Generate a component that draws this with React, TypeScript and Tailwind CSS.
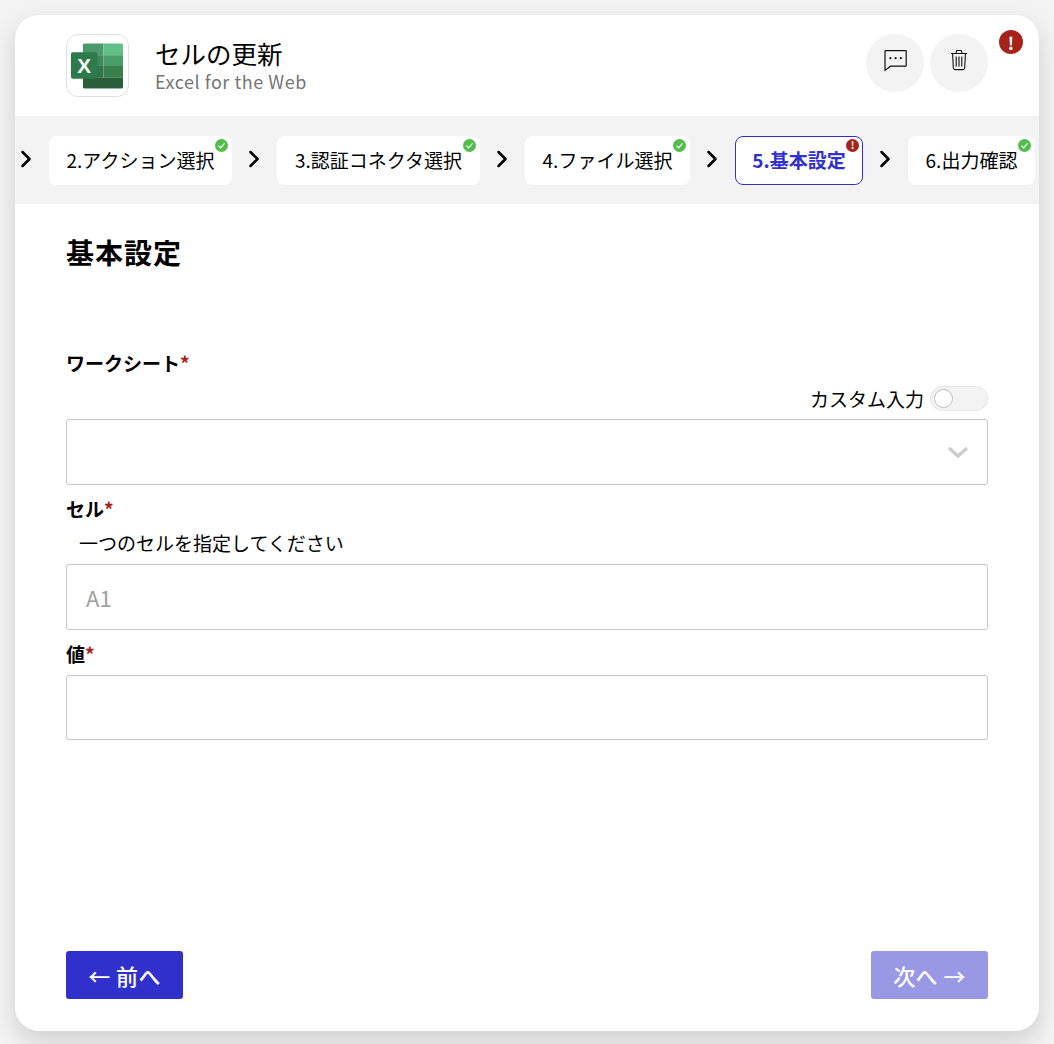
import { ChevronRight } from "lucide-react";

const font = { fontFamily: '"Noto Sans CJK JP", "Noto Sans", sans-serif' };

function ExcelLogo() {
    return (
        <svg width="62" height="62" viewBox="0 0 62 62">
            <defs>
                <clipPath id="sheet">
                    <rect x="16" y="8" width="41" height="46" rx="2" />
                </clipPath>
            </defs>
            <g clipPath="url(#sheet)">
                <rect x="16" y="8" width="21" height="12" fill="#4a9a6c" />
                <rect x="37" y="8" width="20" height="12" fill="#62bf88" />
                <rect x="16" y="20" width="21" height="11" fill="#3f8a5c" />
                <rect x="37" y="20" width="20" height="11" fill="#4a9c68" />
                <rect x="16" y="31" width="21" height="12" fill="#33744a" />
                <rect x="37" y="31" width="20" height="12" fill="#3a7f4e" />
                <rect x="16" y="43" width="41" height="11" fill="#2b5e3a" />
            </g>
            <rect x="4" y="17" width="27" height="27" rx="2" fill="#2f7a4c" />
            <text x="17.5" y="38" textAnchor="middle" fontSize="21" fontWeight="700" fill="#fff" fontFamily='"Liberation Sans", sans-serif'>X</text>
        </svg>
    );
}

function ChatIcon() {
    return (
        <svg width="24" height="24" viewBox="0 0 24 24" fill="none" stroke="#111" strokeWidth="1.2">
            <path d="M2.7 2.6 H22.6 a0.6 0.6 0 0 1 .6 .6 V17.6 a0.6 0.6 0 0 1 -.6 .6 H7.6 L2 22.4 V3.2 a.6 .6 0 0 1 .7 -.6 Z" />
            <circle cx="7.4" cy="10.2" r="1.1" fill="#111" stroke="none" />
            <circle cx="12.6" cy="10.2" r="1.1" fill="#111" stroke="none" />
            <circle cx="17.8" cy="10.2" r="1.1" fill="#111" stroke="none" />
        </svg>
    );
}

function TrashIcon() {
    return (
        <svg width="18" height="22" viewBox="0 0 18 22" fill="none" stroke="#111" strokeWidth="1.1">
            <path d="M1 4.5 H17" />
            <path d="M5.8 4.5 L6.8 1.5 H11.2 L12.2 4.5" />
            <path d="M2.6 4.5 L3.3 19 a1.8 1.8 0 0 0 1.8 1.6 H12.9 a1.8 1.8 0 0 0 1.8 -1.6 L15.4 4.5" />
            <path d="M6.2 7.5 V17.5 M9 7.5 V17.5 M11.8 7.5 V17.5" />
        </svg>
    );
}

function StatusDot({ error }: { error?: boolean }) {
    if (error) {
        return (
            <span className="absolute top-[2px] right-[3px] flex h-[13px] w-[13px] items-center justify-center rounded-full bg-[#a5231b] text-[10px] leading-none font-bold tracking-normal text-white">
                !
            </span>
        );
    }
    return (
        <span className="absolute top-[3px] right-[4px] flex h-[13px] w-[13px] items-center justify-center rounded-full bg-[#52bd4a]">
            <svg width="9" height="9" viewBox="0 0 9 9" fill="none" stroke="#fff" strokeWidth="1.2">
                <path d="M1.5 4.8 L3.6 6.8 L7.5 2.4" />
            </svg>
        </span>
    );
}

function Step({ label, width, active }: { label: string; width: string; active?: boolean }) {
    return (
        <div
            className={`relative flex h-[49px] shrink-0 items-center justify-center rounded-lg text-[19px] whitespace-nowrap ${width} ${
                active ? "border border-[#3030cc] bg-white font-bold text-[#3030cc]" : "bg-white text-black"
            }`}
        >
            {label}
            <StatusDot error={active} />
        </div>
    );
}

function Arrow() {
    return (
        <div className="mb-[3px] flex w-[45px] shrink-0 justify-center">
            <ChevronRight size={28} strokeWidth={2.2} className="-ml-[1px] text-black" />
        </div>
    );
}

function Label({ children }: { children: string }) {
    return (
        <div className="text-[19px] leading-[26px] font-bold text-black">
            {children}
            <span className="text-[#a5231b]">*</span>
        </div>
    );
}

export default function App() {
    return (
        <div style={font} className="h-[1044px] w-[1054px] overflow-hidden bg-[#f3f3f3] p-[15px] pb-[13px]">
            <div className="relative flex h-[1016px] flex-col overflow-hidden rounded-[24px] bg-white shadow-[0_10px_24px_rgba(0,0,0,0.15)]">
                {/* Header */}
                <div className="flex h-[101px] shrink-0 items-start justify-between pt-[19px] pr-[51px] pl-[51px]">
                    <div className="flex items-center">
                        <div className="flex h-[63px] w-[63px] items-center justify-center rounded-[12px] border border-[#dfdfdf]">
                            <ExcelLogo />
                        </div>
                        <div className="ml-[26px] -mt-[2px]">
                            <div className="text-[25.5px] leading-[32px] text-black">セルの更新</div>
                            <div className="text-[18px] leading-[24px] tracking-[0.03em] text-[#757575]">Excel for the Web</div>
                        </div>
                    </div>
                    <div className="flex gap-[6px]">
                        <button className="flex h-[58px] w-[58px] items-center justify-center rounded-full bg-[#f3f3f3] pb-[6px]">
                            <ChatIcon />
                        </button>
                        <button className="flex h-[58px] w-[58px] items-center justify-center rounded-full bg-[#f3f3f3] pb-[6px]">
                            <TrashIcon />
                        </button>
                    </div>
                </div>
                <span className="absolute top-[15px] right-[16px] flex h-6 w-6 items-center justify-center rounded-full bg-[#a5231b] text-[17px] leading-none font-bold text-white">
                    !
                </span>

                {/* Steps */}
                <div className="flex h-[88px] shrink-0 items-center overflow-hidden bg-[#f3f3f3]">
                    <div className="-ml-[11px] flex items-center">
                        <Arrow />
                        <Step label="2.アクション選択" width="w-[183px]" />
                        <Arrow />
                        <Step label="3.認証コネクタ選択" width="w-[203px]" />
                        <Arrow />
                        <Step label="4.ファイル選択" width="w-[165px]" />
                        <Arrow />
                        <Step label="5.基本設定" width="w-[128px]" active />
                        <Arrow />
                        <Step label="6.出力確認" width="w-[127px]" />
                    </div>
                </div>

                {/* Form */}
                <div className="flex flex-1 flex-col px-[51px]">
                    <h1 className="mt-[28px] text-[28px] leading-[40px] font-bold tracking-[1px] text-black">基本設定</h1>

                    <div className="mt-[78px]">
                        <Label>ワークシート</Label>
                    </div>
                    <div className="mt-[10px] flex items-center justify-end">
                        <span className="text-[19px] leading-[25px] text-black">カスタム入力</span>
                        <div className="relative ml-[6px] h-[25px] w-[58px] rounded-full border border-[#e6e6e6] bg-[#f3f3f3]">
                            <div className="absolute top-[2px] left-[3px] h-[19px] w-[19px] rounded-full border border-[#bdbdbd] bg-white" />
                        </div>
                    </div>
                    <div className="mt-[8px] flex h-[66px] items-center justify-end rounded-[3px] border border-[#c8c8c8] pr-[18px]">
                        <svg width="22" height="12" viewBox="0 0 22 12" fill="none" stroke="#cccccc" strokeWidth="3.4">
                            <path d="M2 2 L11 10 L20 2" />
                        </svg>
                    </div>

                    <div className="mt-[11px]">
                        <Label>セル</Label>
                    </div>
                    <div className="mt-[8px] pl-[13px] text-[19px] leading-[25px] text-black">一つのセルを指定してください</div>
                    <div className="mt-[9px] flex h-[66px] items-center rounded-[3px] border border-[#c8c8c8] pl-[19px] text-[22px] text-[#a0a0a0]">
                        A1
                    </div>

                    <div className="mt-[11px]">
                        <Label>値</Label>
                    </div>
                    <div className="mt-[8px] h-[65px] rounded-[3px] border border-[#c8c8c8]" />

                    <div className="mt-auto mb-[32px] flex justify-between">
                        <button className="flex h-[48px] w-[117px] items-center justify-center rounded-[3px] bg-[#3030cc] text-[22px] font-medium tracking-[0.02em] text-white">
                            ← 前へ
                        </button>
                        <button className="flex h-[48px] w-[117px] items-center justify-center rounded-[3px] bg-[#9898e5] text-[22px] font-medium tracking-[0.02em] text-white">
                            次へ →
                        </button>
                    </div>
                </div>
            </div>
        </div>
    );
}
